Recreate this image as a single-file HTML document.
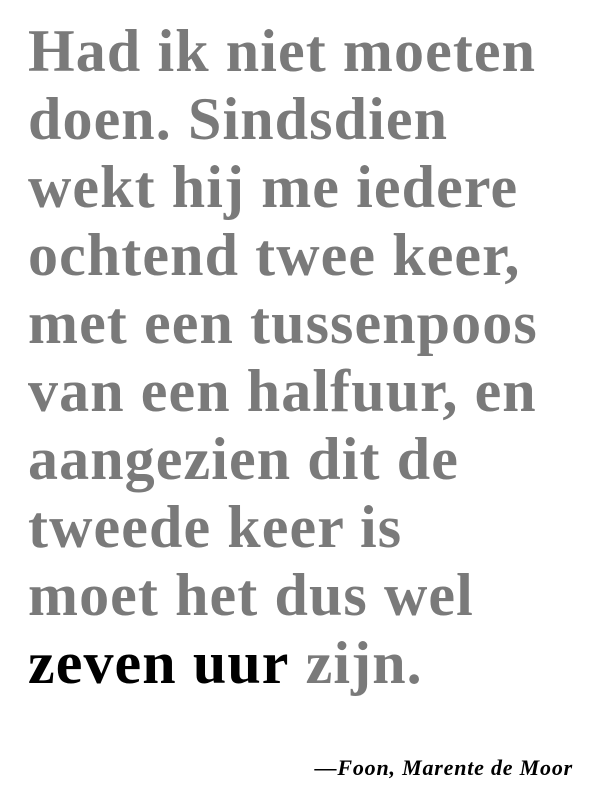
<!DOCTYPE html>
<html><head><style>
html,body{margin:0;padding:0;background:#fff;width:600px;height:800px;overflow:hidden}
.q{position:absolute;left:28px;top:17px;font-family:"Liberation Serif",serif;font-weight:bold;font-size:60px;line-height:68px;letter-spacing:1.1px;color:#7a7a7a;white-space:nowrap}
.q b{color:#000}
.a{position:absolute;right:27px;top:755px;font-family:"Liberation Serif",serif;font-style:italic;font-weight:bold;font-size:22px;letter-spacing:0.8px;color:#000}
</style></head><body>
<div class="q">Had ik niet moeten<br>doen. Sindsdien<br>wekt hij me iedere<br>ochtend twee keer,<br>met een tussenpoos<br>van een halfuur, en<br>aangezien dit de<br>tweede keer is<br>moet het dus wel<br><b>zeven uur</b> zijn.</div>
<div class="a">—Foon, Marente de Moor</div>
</body></html>
